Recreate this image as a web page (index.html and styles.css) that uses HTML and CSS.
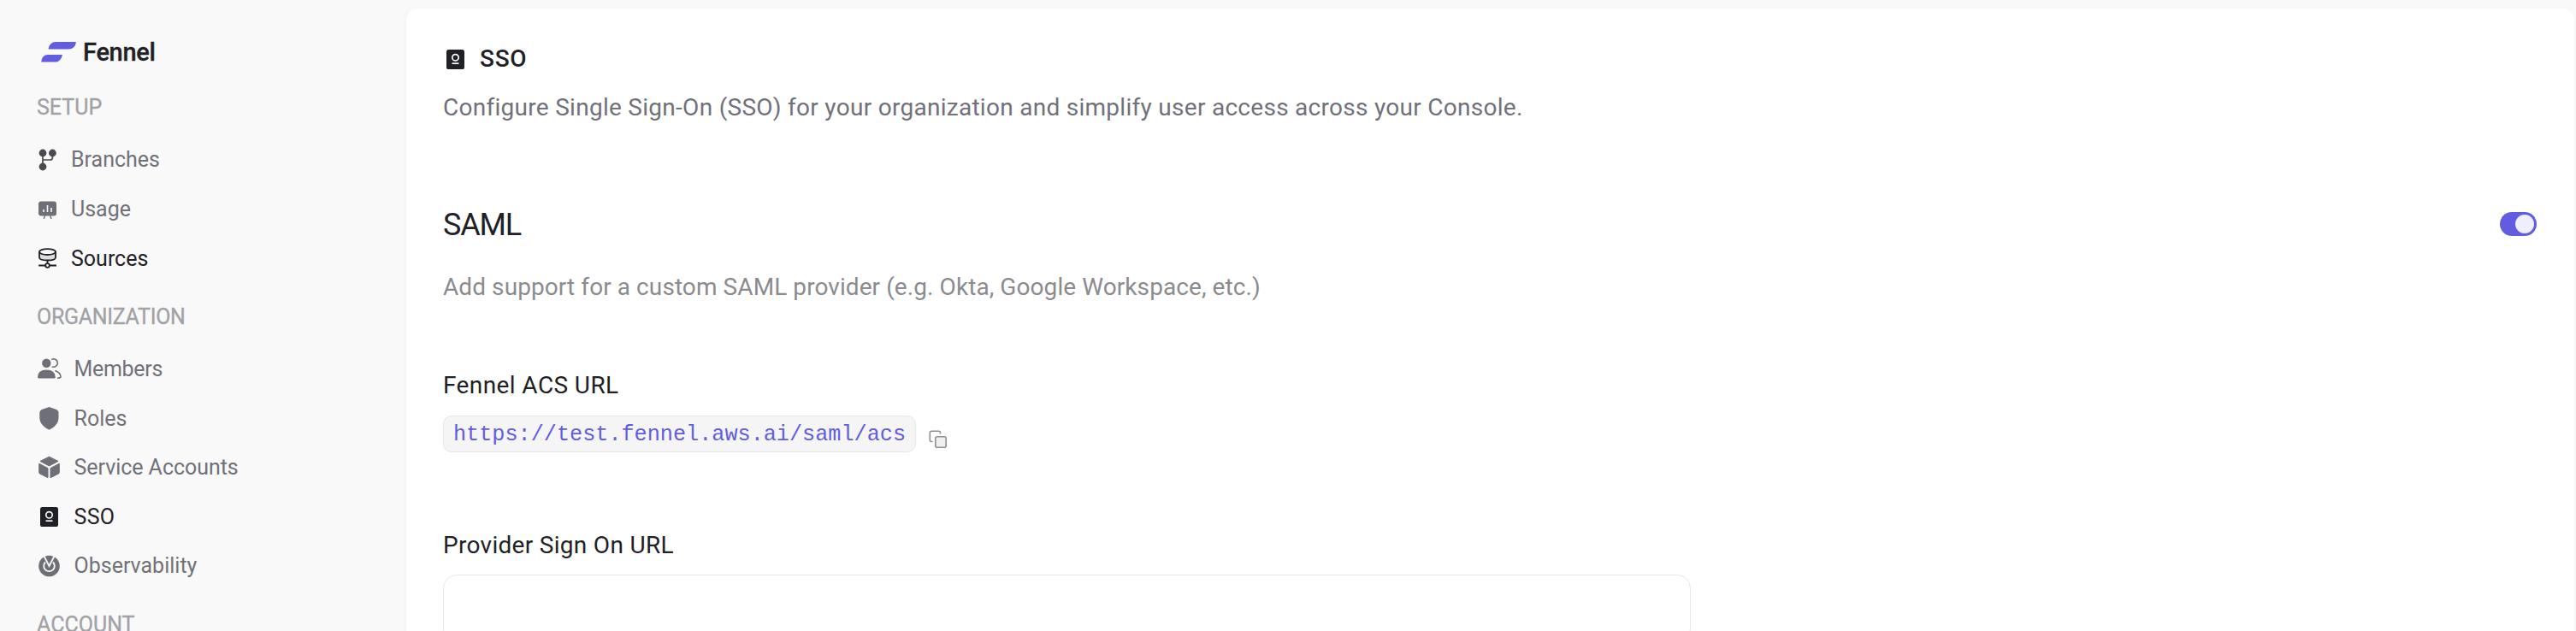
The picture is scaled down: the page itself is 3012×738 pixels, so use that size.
FILE: index.html
```html
<!DOCTYPE html>
<html lang="en">
<head>
<meta charset="utf-8">
<title>Fennel - SSO</title>
<link rel="stylesheet" href="styles.css">
</head>
<body>
<div class="app">
  <aside class="sidebar">
    <div class="brand">
      <svg class="brand-mark" width="42" height="26" viewBox="0 0 42 26"><g fill="#625ce0"><path d="M17 1H41Q40 9.500 32 9.500H8.500Q10 1 17 1Z"/><path d="M8 16H25Q23 24.500 17 24.500H0.200Q1 16 8 16Z"/></g></svg>
      <span class="brand-name">Fennel</span>
    </div>
    <h2 class="group-title setup">SETUP</h2>
    <nav class="group compact">
      <a class="item"><svg class="icon" viewBox="0 0 28 28"><g fill="#4a4a50"><circle cx="6" cy="6" r="4.400"/><circle cx="17.400" cy="6" r="4.400"/><circle cx="6" cy="22" r="4.400"/></g><path d="M6 6V22M17.400 6V11.200Q17.400 14 14.600 14H6" fill="none" stroke="#4a4a50" stroke-width="1.700"/></svg><span>Branches</span></a>
      <a class="item"><svg class="icon" viewBox="0 0 28 28"><rect x="1" y="4.500" width="21" height="17" rx="3.200" fill="#6f6f78"/><path d="M8.500 21L7.300 25M14.700 21L16 25" stroke="#6f6f78" stroke-width="1.400"/><path d="M7 14V17M11.500 9V17M16 12V17" stroke="#f9f9f9" stroke-width="1.600"/></svg><span>Usage</span></a>
      <a class="item active"><svg class="icon" viewBox="0 0 28 28"><g stroke="#1f2127" stroke-width="1.800"><path d="M2 5.500V12Q2 15.500 11.500 15.500T21 12V5.500" fill="#dddde0"/><ellipse cx="11.500" cy="5.600" rx="9.500" ry="3.400" fill="#f9f9f9"/><path d="M11.500 15.500V19M1.200 21.500H9M14 21.500H22" fill="none"/><circle cx="11.500" cy="21.500" r="2.300" fill="#f9f9f9"/></g></svg><span>Sources</span></a>
    </nav>
    <h2 class="group-title org">ORGANIZATION</h2>
    <nav class="group roomy">
      <a class="item"><svg class="icon" viewBox="0 0 28 28"><g fill="#6f6f78"><circle cx="10.300" cy="6.800" r="5.200"/><path d="M0 23Q0 14.500 10.300 14.500T20.800 23Q20.800 24.500 19 24.500H2Q0 24.500 0 23Z"/></g><path d="M16.800 2.200A4.700 4.700 0 1 1 17.300 11M21 15.800Q27.200 18.200 27 23.200Q25.600 24.500 23.600 24" fill="none" stroke="#6f6f78" stroke-width="1.600" stroke-linecap="round"/></svg><span class="members">Members</span></a>
      <a class="item"><svg class="icon" viewBox="0 0 28 28"><path d="M13.500 1L22 4Q24.500 5 24.500 7.500V13.500C24.500 20.500 19.500 24.700 13.500 27.700C7.500 24.700 2.300 20.500 2.300 13.500V7.500Q2.300 5 4.800 4Z" fill="#6f6f78"/></svg><span>Roles</span></a>
      <a class="item"><svg class="icon" viewBox="0 0 28 28"><g fill="#6f6f78" stroke="#6f6f78" stroke-width="1" stroke-linejoin="round"><path d="M13.500 1.200L24 6.400L13.500 12L3 6.400Z"/><path d="M1.700 9.200L12 14.600V25.800L2.600 21Q1.700 20.500 1.700 19.500Z"/><path d="M25.300 9.200L15 14.600V25.800L24.400 21Q25.300 20.500 25.300 19.500Z"/></g></svg><span class="service">Service Accounts</span></a>
      <a class="item active"><svg class="icon" viewBox="0 0 28 28"><rect x="3" y="3" width="21" height="23" rx="2.600" fill="#1f2127"/><circle cx="13.500" cy="12.300" r="3.700" fill="none" stroke="#f9f9f9" stroke-width="1.700"/><path d="M9.500 19.200H17.500" stroke="#f9f9f9" stroke-width="1.700"/></svg><span class="sso">SSO</span></a>
      <a class="item"><svg class="icon" viewBox="0 0 28 28"><circle cx="13.500" cy="14" r="12.300" fill="#6f6f78"/><path d="M7.500 2.500L13.500 14L19.500 2.500M9 9.500A6.300 6.300 0 1 0 18 9.500" fill="none" stroke="#f9f9f9" stroke-width="1.800"/></svg><span>Observability</span></a>
    </nav>
    <h2 class="group-title account">ACCOUNT</h2>
  </aside>
  <main class="card">
    <header class="page-head">
      <svg class="icon" viewBox="0 0 28 28"><rect x="3" y="3" width="21" height="23" rx="2.600" fill="#1f2127"/><circle cx="13.500" cy="12.300" r="3.700" fill="none" stroke="#fff" stroke-width="1.700"/><path d="M9.500 19.200H17.500" stroke="#fff" stroke-width="1.700"/></svg>
      <h1 class="page-title">SSO</h1>
    </header>
    <p class="lead">Configure Single Sign-On (SSO) for your organization and simplify user access across your Console.</p>
    <div class="saml-row">
      <h2 class="saml-title">SAML</h2>
      <span class="toggle"><span class="knob"></span></span>
    </div>
    <p class="hint">Add support for a custom SAML provider (e.g. Okta, Google Workspace, etc.)</p>
    <h3 class="label acs">Fennel ACS URL</h3>
    <div class="url-row">
      <code class="url">https://test.fennel.aws.ai/saml/acs</code>
      <svg class="copy" viewBox="0 0 22 22"><g fill="none" stroke="#8f8f94" stroke-width="1.600"><path d="M4.500 13.500H3.300Q1.300 13.500 1.300 11.500V3.300Q1.300 1.300 3.300 1.300H11.500Q13.500 1.300 13.500 3.300V4.500"/><rect x="7.800" y="7.800" width="12.400" height="12.400" rx="2" fill="#f0f0f1"/></g></svg>
    </div>
    <h3 class="label provider">Provider Sign On URL</h3>
    <div class="field"></div>
  </main>
</div>
</body>
</html>
```
FILE: styles.css
```css
* { box-sizing: border-box; margin: 0; }
body {
  height: 738px;
  overflow: hidden;
  background: #f9f9f9;
  color: #1f2127;
  font-family: Roboto, "Liberation Sans", sans-serif;
  font-weight: 400;
}
.app { display: flex; height: 738px; overflow: hidden; }
.sidebar { width: 475px; flex: none; padding: 44px 0 0 44px; }
.brand { display: flex; align-items: center; height: 34px; padding-left: 4px; }
.brand-name { margin-left: 7px; font-size: 29px; font-weight: 500; line-height: 34px; letter-spacing: -0.3px; -webkit-text-stroke: 0.3px #1f2127; }
.group-title { margin-left: -1px; font-size: 25px; font-weight: 400; line-height: 30px; color: #a1a1a6; -webkit-text-stroke: 0.3px #a1a1a6; }
.setup { margin-top: 33px; margin-bottom: 17px; }
.org { margin-top: 24px; margin-bottom: 17px; letter-spacing: -0.3px; }
.account { margin-top: 25px; }
.item { display: flex; align-items: center; height: 58px; font-size: 25px; line-height: 30px; color: #71717a; }
.roomy .item { height: 57.5px; }
.roomy .item span { padding-top: 1px; }
.item.active { color: #1f2127; }
.icon { width: 28px; height: 28px; flex: none; }
.compact .item { gap: 11px; }
.roomy .item { gap: 14.5px; }
.members { letter-spacing: -0.3px; }
.service { letter-spacing: -0.05px; }
.sso { letter-spacing: 0.3px; }
.card {
  width: 2535px;
  height: 800px;
  flex: none;
  margin-top: 10px;
  padding: 40px 44px 0 43px;
  background: #fff;
  border-radius: 14px;
  box-shadow: 0 2px 5px rgba(0, 0, 0, 0.05);
}
.page-head { display: flex; align-items: center; height: 37px; padding-left: 1px; gap: 14px; }
.page-title { font-size: 28px; font-weight: 500; line-height: 36px; letter-spacing: 0.7px; }
.lead { margin-top: 21px; font-size: 28px; line-height: 36px; letter-spacing: 0.28px; color: #71717a; }
.saml-row { display: flex; align-items: center; justify-content: space-between; height: 44px; margin-top: 96px; }
.saml-title { padding-top: 2px; font-size: 36px; font-weight: 400; line-height: 44px; letter-spacing: -1.2px; }
.toggle { display: flex; align-items: center; justify-content: flex-end; width: 43px; height: 28px; padding-right: 3px; border-radius: 14px; background: #625ce0; }
.knob { width: 22px; height: 22px; border-radius: 50%; background: #efeefc; }
.hint { margin-top: 34px; font-size: 28px; line-height: 36px; letter-spacing: 0.08px; color: #8b8b8f; }
.label { font-size: 28px; font-weight: 400; line-height: 36px; }
.acs { margin-top: 79px; letter-spacing: 0.4px; }
.url-row { display: flex; align-items: flex-start; height: 43px; margin-top: 17px; }
.url { display: block; width: 553px; height: 43px; padding: 1px 0 0 11px; border: 1px solid #e6e6e7; border-radius: 10px; background: #f5f5f6; color: #625ce0; font: 25.2px/41px "Liberation Mono", monospace; }
.copy { width: 22px; height: 22px; margin: 17px 0 0 15px; }
.provider { margin-top: 91px; letter-spacing: 0.3px; }
.field { width: 1459px; height: 80px; margin-top: 16px; border: 1px solid #e8e8ea; border-radius: 16px; }
```
